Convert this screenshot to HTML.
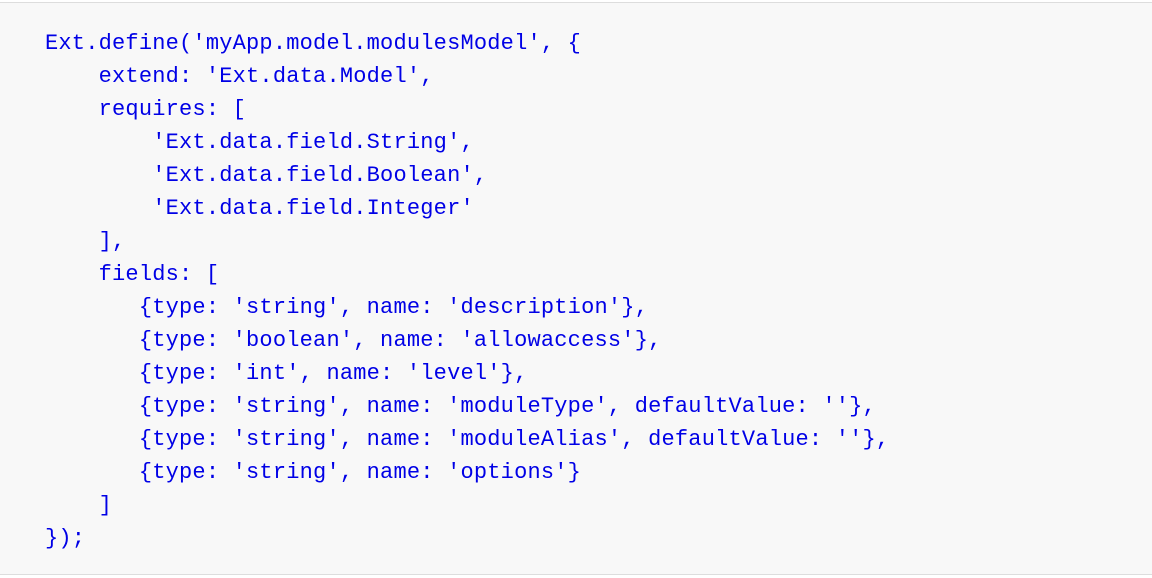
<!DOCTYPE html>
<html><head><style>
html,body{margin:0;padding:0;background:#fff;}
.box{position:absolute;left:0;top:2px;width:1152px;height:573px;background:#f8f8f8;border-top:1px solid #ddd;border-bottom:1px solid #ddd;box-sizing:border-box;}
pre{margin:0;position:absolute;left:45px;top:24px;font-family:"Liberation Mono",monospace;font-size:22px;line-height:33px;color:#0000e6;letter-spacing:0.2px;}
</style></head><body>
<div class="box"><pre>Ext.define('myApp.model.modulesModel', {
    extend: 'Ext.data.Model',
    requires: [
        'Ext.data.field.String',
        'Ext.data.field.Boolean',
        'Ext.data.field.Integer'
    ],
    fields: [
       {type: 'string', name: 'description'},
       {type: 'boolean', name: 'allowaccess'},
       {type: 'int', name: 'level'},
       {type: 'string', name: 'moduleType', defaultValue: ''},
       {type: 'string', name: 'moduleAlias', defaultValue: ''},
       {type: 'string', name: 'options'}
    ]
});</pre></div>
</body></html>
